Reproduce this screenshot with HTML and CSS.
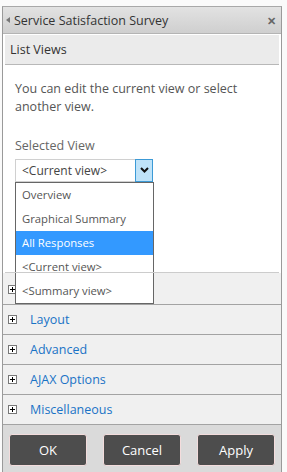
FILE: index.html
```html
<!DOCTYPE html>
<html>
<head>
<meta charset="utf-8">
<link rel="stylesheet" href="styles.css">
</head>
<body>
<div class="panel">
  <div class="hdr">
    <span class="tri"></span>
    <span class="title">Service Satisfaction Survey</span>
    <span class="close">✕</span>
  </div>
  <div class="content">
    <div class="bar">List Views</div>
    <p class="desc">You can edit the current view or select another view.</p>
    <div class="label">Selected View</div>
    <div class="select">
      <span class="val">&lt;Current view&gt;</span>
      <span class="btn"><svg width="9" height="6" viewBox="0 0 9 6"><path d="M1 1 L4.5 4.5 L8 1" fill="none" stroke="#111" stroke-width="2"/></svg></span>
      <ul class="list">
        <li>Overview</li>
        <li>Graphical Summary</li>
        <li class="sel">All Responses</li>
        <li>&lt;Current view&gt;</li>
        <li>&lt;Summary view&gt;</li>
      </ul>
    </div>
  </div>
  <div class="rows">
    <div class="row"><span class="plus"></span><span class="rt">Appearance</span></div>
    <div class="row"><span class="plus"></span><span class="rt">Layout</span></div>
    <div class="row"><span class="plus"></span><span class="rt">Advanced</span></div>
    <div class="row"><span class="plus"></span><span class="rt">AJAX Options</span></div>
    <div class="row"><span class="plus"></span><span class="rt">Miscellaneous</span></div>
  </div>
  <div class="actions">
    <button class="b">OK</button>
    <button class="b">Cancel</button>
    <button class="b">Apply</button>
  </div>
</div>
</body>
</html>
```
FILE: styles.css
```css
html, body { margin: 0; padding: 0; background: #fafafa; }
body { font-family: "Open Sans", "Noto Sans", sans-serif; font-size: 12.5px; }
.panel {
  margin: 6px 0 0 2px;
  width: 278px;
  border-left: 1px solid #9a9a9a;
  border-right: 1px solid #9a9a9a;
  border-top: 1px solid #a8a8a8;
  height: 465px;
  display: flex;
  flex-direction: column;
}
.hdr {
  height: 26px;
  flex: none;
  background: linear-gradient(#e2e2e2, #cfcfcf);
  border-bottom: 1px solid #b4b4b4;
  display: flex;
  align-items: center;
  position: relative;
  color: #333;
}
.tri {
  width: 0; height: 0;
  border-top: 3px solid transparent;
  border-bottom: 3px solid transparent;
  border-right: 4px solid #777;
  margin: 0 4px 0 3px;
}
.title { font-size: 12.5px; }
.close { position: absolute; right: 5px; top: 6px; font-size: 11px; color: #666; font-weight: bold; }
.content {
  background: #fff;
  padding: 1px 2px 0 2px;
  height: 238px;
  flex: none;
  position: relative;
  z-index: 2;
}
.bar {
  height: 29px;
  background: #ebebeb;
  border-bottom: 1px solid #b8b8b8;
  line-height: 29px;
  padding-left: 5px;
  color: #333;
}
.desc {
  margin: 15px 0 0 10px;
  line-height: 18px;
  color: #555;
  width: 250px;
}
.label { margin: 21px 0 0 10px; color: #666; line-height: 18px; }
.select {
  position: relative;
  margin: 4px 0 0 10px;
  width: 137px;
  height: 21px;
  border: 1px solid #d0d0d0;
  border-right: none;
  display: flex;
  align-items: center;
}
.val { padding-left: 6px; color: #444; flex: 1; font-size: 12px; }
.btn {
  background: #bfe3f9;
  border: 1px solid #3c9ad6;
  box-sizing: border-box;
  display: flex; align-items: center; justify-content: center;
  margin-top: -1px; height: 23px; width: 18px;
}
.list {
  position: absolute;
  left: -1px; top: 22px;
  width: 137px;
  margin: 0; padding: 0;
  list-style: none;
  background: #fff;
  border: 1px solid #666;
  font-size: 11.3px;
}
.list li { height: 24px; line-height: 24px; padding-left: 6px; color: #555; }
.list li.sel { background: #3399ff; color: #fff; }
.content::after {
  content: "";
  position: absolute;
  left: 2px; right: 2px; bottom: 0;
  border-bottom: 1px solid #ccc;
}
.rows { background: #f0f0f0; padding-top: 2px; flex: none; }
.row {
  height: 29px;
  border-bottom: 1px solid #a3a3a3;
  display: flex;
  align-items: center;
}
.plus {
  width: 9px; height: 9px;
  border: 1px solid #777;
  box-sizing: border-box;
  margin: 0 13px 0 5px;
  position: relative;
  background: #fff;
}
.plus::before { content: ""; position: absolute; left: 1px; top: 3px; width: 5px; height: 1px; background: #000; }
.plus::after { content: ""; position: absolute; left: 3px; top: 1px; width: 1px; height: 5px; background: #000; }
.rt { color: #1a73c6; font-size: 12.5px; }
.actions {
  flex: 1;
  background: #dadada;
  display: flex;
  gap: 16px;
  padding: 9px 0 0 6px;
}
.b {
  width: 78px;
  height: 32px;
  background: #4d4d4d;
  border: 1px solid #f3dcdc;
  border-radius: 3px;
  color: #fff;
  font-family: "Open Sans", sans-serif;
  font-size: 13px;
  padding: 0;
}
```
